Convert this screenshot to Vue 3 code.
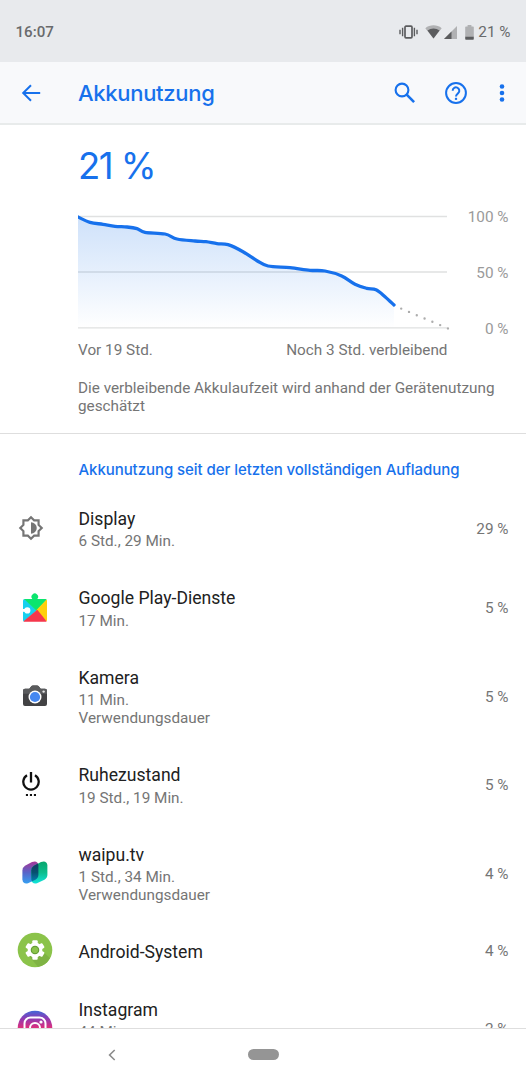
<script setup>
import { computed } from 'vue';

const apps = [
  { icon: 'display', name: 'Display', lines: ['6 Std., 29 Min.'], percent: 29, small: true },
  { icon: 'play', name: 'Google Play-Dienste', lines: ['17 Min.'], percent: 5 },
  { icon: 'camera', name: 'Kamera', lines: ['11 Min.', 'Verwendungsdauer'], percent: 5 },
  { icon: 'idle', name: 'Ruhezustand', lines: ['19 Std., 19 Min.'], percent: 5, small: true },
  { icon: 'waipu', name: 'waipu.tv', lines: ['1 Std., 34 Min.', 'Verwendungsdauer'], percent: 4 },
  { icon: 'android', name: 'Android-System', lines: [], percent: 4 },
  { icon: 'instagram', name: 'Instagram', lines: ['44 Min.'], percent: 2, tall: true }
];

// battery level over time, in chart units (y: 2 = 100 %, 113 = 0 %)
const points = [
  [0, 2], [12, 7.3], [25, 9.3], [37, 11.3], [49, 12], [59, 13.7], [67, 17.3], [87, 19],
  [99, 24], [117, 26], [128, 26.7], [139, 28.7], [150, 29.7], [165, 36.7], [179, 45.7],
  [190, 51], [212, 52.7], [232, 55.3], [247, 56], [263.7, 61], [277, 69.3], [288.7, 73.3],
  [298, 74.8], [307, 81.7], [316, 90]
];

const linePath = computed(() => {
  let d = `M${points[0]}`;
  for (let i = 0; i < points.length - 1; i++) {
    const p0 = points[i - 1] || points[i];
    const p1 = points[i];
    const p2 = points[i + 1];
    const p3 = points[i + 2] || p2;
    d += ` C${p1[0] + (p2[0] - p0[0]) / 6},${p1[1] + (p2[1] - p0[1]) / 6}`;
    d += ` ${p2[0] - (p3[0] - p1[0]) / 6},${p2[1] - (p3[1] - p1[1]) / 6} ${p2}`;
  }
  return d;
});

const areaPath = computed(() => `${linePath.value} V113 H0 Z`);
</script>

<template>
  <div class="screen">
    <header class="status-bar">
      <span class="clock">16:07</span>
      <div class="status-icons">
        <svg class="vibrate" width="19" height="14" viewBox="0 0 19 14">
          <rect x="6" y="1.2" width="7" height="11.6" rx="1" fill="none" stroke="#5b5c5e" stroke-width="1.7" />
          <path d="M3.6 2.8v8.4M15.4 2.8v8.4M1 4.8v4.4M18 4.8v4.4" stroke="#5b5c5e" stroke-width="1.4" />
        </svg>
        <svg class="wifi" width="17" height="14" viewBox="0 0 17 14">
          <path d="M.3 3.2C4.9-.6 12.1-.6 16.7 3.2L8.5 13.4z" fill="#b0b1b3" />
          <path d="M2.5 5.5C6 2.7 11 2.7 14.5 5.5L8.5 13.4z" fill="#5b5c5e" />
        </svg>
        <svg class="signal" width="13" height="13" viewBox="0 0 13 13">
          <path d="M13 0v13H0z" fill="#b0b1b3" />
          <path d="M7.5 5.5V13H0z" fill="#5b5c5e" />
        </svg>
        <svg class="battery" width="9" height="15" viewBox="0 0 9 15">
          <path d="M2.6 0h3.8v1.5H8q.8 0 .8.8V12H.2V2.3q0-.8.8-.8h1.600z" fill="#b0b1b3" />
          <path d="M.2 11.7h8.6v2.2q0 .8-.8.8H1q-.8 0-.8-.8z" fill="#5b5c5e" />
        </svg>
        <span>21 %</span>
      </div>
    </header>

    <nav class="toolbar">
      <svg class="back" width="20" height="18" viewBox="0 0 20 18" fill="none" stroke="#1771ec" stroke-width="2">
        <path d="M19.2 9H2.5M10 1.2L2.2 9l7.800 7.8" />
      </svg>
      <h1>Akkunutzung</h1>
      <svg class="search" width="22" height="22" viewBox="0 0 22 22" fill="none" stroke="#1771ec">
        <circle cx="8" cy="8" r="6.4" stroke-width="2.1" />
        <path d="M12.7 12.7l7.4 7.4" stroke-width="2.6" />
      </svg>
      <svg class="help" width="24" height="24" viewBox="0 0 24 24" fill="none" stroke="#1771ec" stroke-width="2">
        <circle cx="12" cy="12" r="9.9" />
        <path d="M8.7 9.8a3.3 3.3 0 1 1 5.6 2.2c-1.1 1.1-2.3 1.7-2.3 3.5" />
        <path d="M12 16.8v2.1" stroke-width="2.2" />
      </svg>
      <svg class="more" width="6" height="18" viewBox="0 0 6 18" fill="#1771ec">
        <circle cx="3" cy="2.5" r="2.3" />
        <circle cx="3" cy="9" r="2.3" />
        <circle cx="3" cy="15.5" r="2.3" />
      </svg>
    </nav>

    <section class="summary">
      <div class="level">21 %</div>
      <div class="chart-row">
        <svg class="chart" width="372" height="116" viewBox="0 0 372 116" fill="none">
          <defs>
            <linearGradient id="fade" x1="0" y1="2" x2="0" y2="113" gradientUnits="userSpaceOnUse">
              <stop offset="0" stop-color="#1a73e8" stop-opacity=".21" />
              <stop offset=".5" stop-color="#1a73e8" stop-opacity=".11" />
              <stop offset="1" stop-color="#1a73e8" stop-opacity="0" />
            </linearGradient>
            <clipPath id="plot"><rect width="372" height="116" /></clipPath>
          </defs>
          <path d="M0 1.5h369M0 57h369M0 112.8h369" stroke="#e0e1e1" stroke-width="1.3" />
          <path :d="areaPath" fill="url(#fade)" />
          <path :d="linePath" stroke="#1771ec" stroke-width="3.3" stroke-linecap="round" clip-path="url(#plot)" />
          <path d="M323.2 93.6L370 113.4" stroke="#adadad" stroke-width="2.4" stroke-linecap="round" stroke-dasharray="0 8.46" />
        </svg>
        <div class="scale">
          <span>100 %</span>
          <span>50 %</span>
          <span>0 %</span>
        </div>
      </div>
      <div class="range">
        <span>Vor 19 Std.</span>
        <span>Noch 3 Std. verbleibend</span>
      </div>
      <p class="hint">Die verbleibende Akkulaufzeit wird anhand der Gerätenutzung geschätzt</p>
    </section>

    <main class="usage">
      <h2>Akkunutzung seit der letzten vollständigen Aufladung</h2>
      <div v-for="app in apps" :key="app.name" class="app-row" :class="{ tall: app.tall }">
        <div class="app-icon" :class="{ small: app.small }">
          <svg v-if="app.icon === 'display'" width="26" height="26" viewBox="0 0 24 24" fill="#757575">
            <path fill-rule="evenodd" d="M20 15.310L23.310 12 20 8.690V4h-4.690L12 .69 8.690 4H4v4.690L.69 12 4 15.310V20h4.690L12 23.310 15.310 20H20zM18 14.500V18h-3.500L12 20.500 9.500 18H6v-3.500L3.500 12 6 9.500V6h3.500L12 3.500 14.500 6H18v3.500l2.500 2.500z" />
            <path d="M12 6.7a5.3 5.3 0 0 1 0 10.6z" />
          </svg>
          <svg v-else-if="app.icon === 'play'" width="24" height="30" viewBox="0 0 24 30">
            <path d="M0 8.5Q0 7 1.5 7L14 18.5 1 29.5Q0 29 0 28z" fill="#17d0ee" />
            <path d="M1 7h8.3a3.3 3.3 0 1 1 5 0h8.2q.8 0 1.2.7L13.5 18.8z" fill="#0be56e" />
            <path d="M23.6 7.5q.4.5.4 1.2V28q0 .8-.5 1.3L13 18.500z" fill="#ffcf0c" />
            <path d="M14.3 17.8L23.6 29.2q-.4.5-1.2.5H1.600Q.9 29.700.5 29.200z" fill="#f5374c" />
            <circle cx="4.300" cy="18.400" r="3.100" fill="#fff" />
            <path d="M0 17h3v2.800H0z" fill="#fff" />
          </svg>
          <svg v-else-if="app.icon === 'camera'" width="24" height="22" viewBox="0 0 24 22">
            <path d="M2 3.700h4.300L8.500 1Q9 .4 9.800.4h4.400q.8 0 1.300.6l2.200 2.700H22q2 0 2 2V19q0 2-2 2H2q-2 0-2-2V5.700q0-2 2-2z" fill="#424244" />
            <path d="M2 3.700h4.300L8.500 1Q9 .4 9.800.4h4.400q.8 0 1.300.6l2.200 2.700H22q2 0 2 2v3H0v-3q0-2 2-2z" fill="#5a5b5d" />
            <circle cx="12" cy="12" r="6.500" fill="#fff" />
            <circle cx="12" cy="12" r="5.100" fill="#4688f1" />
            <circle cx="20.600" cy="6.600" r="1.200" fill="#e5e5e5" />
          </svg>
          <svg v-else-if="app.icon === 'idle'" width="18" height="26" viewBox="0 0 18 26" fill="none" stroke="#111">
            <path d="M9 1v10.500M5 4.300a7.700 7.700 0 1 0 8 0" stroke-width="2.300" />
            <path d="M3.900 24H6M7.900 24H10M11.900 24H14" stroke-width="2.200" />
          </svg>
          <svg v-else-if="app.icon === 'waipu'" width="26" height="24" viewBox="0 0 26 24">
            <defs>
              <linearGradient id="wa" x1="0" y1="0" x2="0" y2="1">
                <stop offset="0" stop-color="#a63596" />
                <stop offset=".5" stop-color="#5964c8" />
                <stop offset="1" stop-color="#35a0f2" />
              </linearGradient>
              <linearGradient id="wb" x1="0" y1="0" x2="0" y2="1">
                <stop offset="0" stop-color="#08a66d" />
                <stop offset=".5" stop-color="#0bbd8c" />
                <stop offset="1" stop-color="#12e4dc" />
              </linearGradient>
              <linearGradient id="wc" x1="0" y1="0" x2="0" y2="1">
                <stop offset="0" stop-color="#17325f" />
                <stop offset=".5" stop-color="#06506f" />
                <stop offset="1" stop-color="#0587c0" />
              </linearGradient>
              <clipPath id="left">
                <path d="M.4 9.500Q.4 6.500 3 4.800L10 1q5.500-2 6.400 3v9.500q0 3.500-3 5.300L6 22.300Q1 23.500.4 18.500z" />
              </clipPath>
            </defs>
            <path d="M.4 9.500Q.4 6.500 3 4.800L10 1q5.500-2 6.400 3v9.500q0 3.500-3 5.300L6 22.300Q1 23.500.4 18.500z" fill="url(#wa)" />
            <path d="M9.300 9.500q0-3 2.600-4.700L19 1q5.500-2 6.400 3v9.500q0 3.500-3 5.300L15 22.300q-5 1.200-5.700-3.800z" fill="url(#wb)" />
            <path d="M9.300 9.500q0-3 2.600-4.700L19 1q5.500-2 6.400 3v9.500q0 3.500-3 5.300L15 22.300q-5 1.200-5.700-3.800z" fill="url(#wc)" clip-path="url(#left)" />
          </svg>
          <svg v-else-if="app.icon === 'android'" width="36" height="36" viewBox="0 0 36 36">
            <circle cx="18" cy="18" r="17.300" fill="#8bc34a" />
            <path d="M11 23l10 11.800Q29 33.500 33 26l-8-7z" fill="#7fb344" />
            <g fill="#fff">
              <rect v-for="a in [0, 60, 120]" :key="a" x="15.300" y="8.300" width="5.400" height="19.400" rx="1" :transform="`rotate(${a} 18 18)`" />
              <circle cx="18" cy="18" r="7.400" />
            </g>
            <circle cx="18" cy="18" r="3.700" fill="#8bc34a" stroke="#659f35" stroke-width="1.200" />
          </svg>
          <svg v-else width="36" height="36" viewBox="0 0 36 36">
            <defs>
              <linearGradient id="ig" x1="0" y1="0" x2="0" y2="1">
                <stop offset="0" stop-color="#4168d8" />
                <stop offset=".22" stop-color="#8d3bb4" />
                <stop offset=".48" stop-color="#d92f7f" />
                <stop offset="1" stop-color="#fdb950" />
              </linearGradient>
            </defs>
            <circle cx="18" cy="18" r="17.300" fill="url(#ig)" />
            <rect x="7.500" y="7.500" width="21" height="21" rx="6" fill="none" stroke="#fff" stroke-width="2" />
            <circle cx="18" cy="18" r="5" fill="none" stroke="#fff" stroke-width="2" />
            <circle cx="24" cy="12" r="1.600" fill="#fff" />
          </svg>
        </div>
        <div class="app-text">
          <div class="app-name">{{ app.name }}</div>
          <div v-if="app.lines.length" class="app-detail">
            <div v-for="line in app.lines" :key="line">{{ line }}</div>
          </div>
        </div>
        <div class="app-percent">{{ app.percent }} %</div>
      </div>
    </main>

    <footer class="nav-bar">
      <svg width="8" height="12" viewBox="0 0 8 12" fill="none" stroke="#8b8b8b" stroke-width="1.600">
        <path d="M6.700 1L1.600 6l5.100 5" />
      </svg>
      <div class="home"></div>
    </footer>
  </div>
</template>

<style>
body {
  margin: 0;
}
</style>

<style scoped>
.screen {
  display: flex;
  flex-direction: column;
  width: 526px;
  height: 1080px;
  overflow: hidden;
  box-sizing: border-box;
  background: #fff;
  font-family: Roboto, "Liberation Sans", sans-serif;
  font-size: 15.3px;
  color: #757575;
}

.screen svg {
  display: block;
  flex: none;
}

.status-bar {
  display: flex;
  flex: none;
  align-items: center;
  justify-content: space-between;
  height: 62px;
  padding: 2px 15.5px 0 15.5px;
  box-sizing: border-box;
  background: #e8eaed;
  color: #696a6c;
}

.clock {
  font-size: 15.1px;
  font-weight: 500;
}

.status-icons {
  display: flex;
  align-items: center;
}

.wifi {
  margin-left: 7px;
}

.signal {
  margin-left: 2px;
}

.battery {
  margin: 0 4.5px 0 8px;
}

.toolbar {
  display: flex;
  flex: none;
  align-items: center;
  height: 63px;
  padding: 0 21px;
  box-sizing: border-box;
  border-bottom: 2px solid #e8ebeb;
  background: #f8f9fb;
}

.toolbar h1 {
  flex: 1;
  margin: 0 0 0 37px;
  font-family: Inter, sans-serif;
  font-size: 22px;
  font-weight: 500;
  letter-spacing: -0.3px;
  color: #1771ec;
}

.search {
  margin-right: -2px;
}

.help {
  margin: 0 31px 0 30px;
}

.summary {
  flex: none;
  height: 292px;
  padding: 16px 17.5px 0 78px;
  border-bottom: 1px solid #dedede;
}

.level {
  height: 48px;
  line-height: 50px;
  font-family: Inter, sans-serif;
  font-size: 36.5px;
  letter-spacing: -1.5px;
  color: #1771ec;
}

.chart-row {
  display: flex;
  justify-content: space-between;
  margin-top: 26px;
}

.scale {
  display: flex;
  flex-direction: column;
  justify-content: space-between;
  height: 130px;
  margin-top: -7px;
  line-height: 18px;
  text-align: right;
  color: #9a9a9a;
}

.range {
  display: flex;
  justify-content: space-between;
  width: 369.5px;
  margin-top: 3px;
  line-height: 18px;
}

.hint {
  margin: 20px 0 0;
  line-height: 18px;
}

.usage {
  flex: 1;
  min-height: 0;
  overflow: hidden;
}

.usage h2 {
  height: 54.5px;
  margin: 0;
  padding-left: 78.5px;
  box-sizing: border-box;
  line-height: 72px;
  font-family: Inter, sans-serif;
  font-size: 15px;
  font-weight: 500;
  letter-spacing: -0.06px;
  color: #1771ec;
}

.app-row {
  display: flex;
  align-items: center;
  padding: 18px 17.5px 17.3px 17px;
}

.app-row.tall {
  height: 62px;
}

.app-row.tall .app-text {
  align-self: flex-start;
}

.app-icon {
  display: flex;
  justify-content: center;
  align-items: center;
  width: 35px;
  height: 36px;
  margin: -11px 26.5px -9px 0;
}

.app-icon.small {
  width: 27px;
  margin-right: 34.5px;
}

.app-text {
  flex: 1;
  padding-top: 2.2px;
}

.app-name {
  height: 20.5px;
  line-height: 20.5px;
  font-size: 17.6px;
  color: #212121;
}

.app-detail {
  padding-top: 3.8px;
  line-height: 17.8px;
}

.nav-bar {
  display: flex;
  flex: none;
  align-items: center;
  height: 52px;
  padding-left: 108px;
  box-sizing: border-box;
  border-top: 1px solid #dedede;
  background: #fff;
}

.home {
  width: 31px;
  height: 11px;
  margin-left: 132px;
  border-radius: 6px;
  background: #959595;
}
</style>
